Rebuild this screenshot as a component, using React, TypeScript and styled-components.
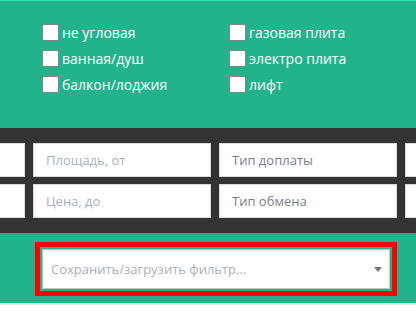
import styled, { createGlobalStyle } from 'styled-components';

const GlobalStyle = createGlobalStyle`
  html, body {
    margin: 0;
    padding: 0;
    background: #ffffff;
    overflow: hidden;
  }
  body {
    font-family: "Open Sans", "Noto Sans", sans-serif;
  }
`;

const leftOptions = ['не угловая', 'ванная/душ', 'балкон/лоджия'];
const rightOptions = ['газовая плита', 'электро плита', 'лифт'];

// the outer columns lie mostly off screen, only their edges show
const fields = [
  { id: 'a1', text: '', kind: 'select' },
  { id: 'a2', text: 'Площадь, от', kind: 'input' },
  { id: 'a3', text: 'Тип доплаты', kind: 'select' },
  { id: 'a4', text: '', kind: 'input' },
  { id: 'b1', text: '', kind: 'select' },
  { id: 'b2', text: 'Цена, до', kind: 'input' },
  { id: 'b3', text: 'Тип обмена', kind: 'select' },
  { id: 'b4', text: '', kind: 'input' },
];

const App = () => {
  return (
    <Page>
      <GlobalStyle />
      <FeaturesSection>
        <FeatureColumns>
          {[leftOptions, rightOptions].map((column, i) => (
            <FeatureColumn key={i}>
              {column.map((label) => (
                <CheckRow key={label}>
                  <CheckBox />
                  <CheckLabel>{label}</CheckLabel>
                </CheckRow>
              ))}
            </FeatureColumn>
          ))}
        </FeatureColumns>
      </FeaturesSection>

      <FilterBand>
        <FilterGrid>
          {fields.map((field) =>
            field.kind === 'input' ? (
              <TextField key={field.id} placeholder={field.text} readOnly />
            ) : (
              <SelectField key={field.id}>{field.text}</SelectField>
            )
          )}
        </FilterGrid>
      </FilterBand>

      <SaveSection>
        <Highlight>
          <SaveSelect>
            <SavePlaceholder>Сохранить/загрузить фильтр...</SavePlaceholder>
            <Caret width="8" height="5" viewBox="0 0 8 5">
              <path d="M0 0 L8 0 L4 5 Z" fill="#777" />
            </Caret>
          </SaveSelect>
        </Highlight>
      </SaveSection>

      <Footer />
    </Page>
  );
};

const Page = styled.div`
  width: 416px;
  overflow: hidden;
`;

const FeaturesSection = styled.div`
  background-color: #22b38c;
  border-top: 1px solid #2fe0a8;
  height: 127px;
`;

const FeatureColumns = styled.div`
  display: flex;
  padding: 23px 0 0 42px;
`;

const FeatureColumn = styled.div`
  width: 188px;
  display: flex;
  flex-direction: column;
  gap: 9px;
`;

const CheckRow = styled.div`
  display: flex;
  align-items: center;
  height: 17px;
  gap: 3px;
`;

const CheckBox = styled.span`
  box-sizing: border-box;
  width: 17px;
  height: 17px;
  background: #ffffff;
  border: 1px solid #858585;
  border-radius: 2px;
`;

const CheckLabel = styled.span`
  color: #ffffff;
  font-size: 14px;
  line-height: 17px;
`;

const FilterBand = styled.div`
  background-color: #333333;
  padding: 15px 0;
`;

const FilterGrid = styled.div`
  display: grid;
  grid-template-columns: repeat(4, 178px);
  column-gap: 8px;
  row-gap: 7px;
  margin-left: -153px;
`;

const fieldBase = `
  box-sizing: border-box;
  height: 34px;
  margin: 0;
  padding: 0 12px;
  background: #ffffff;
  border: 1px solid #d8d8d8;
  font-family: "Open Sans", "Noto Sans", sans-serif;
  font-size: 13px;
  outline: none;
`;

const TextField = styled.input`
  ${fieldBase}
  width: 178px;
  color: #555;

  &::placeholder {
    color: #aab0bb;
  }
`;

const SelectField = styled.div`
  ${fieldBase}
  display: flex;
  align-items: center;
  color: #7a8089;
  white-space: nowrap;
  overflow: hidden;
`;

const SaveSection = styled.div`
  background-color: #22b38c;
  height: 70px;
  box-sizing: border-box;
  padding: 9px 0 0 35px;
`;

const Highlight = styled.div`
  box-sizing: border-box;
  width: 362px;
  border: 5px solid #ff0000;
  padding: 2px;
`;

const SaveSelect = styled.div`
  box-sizing: border-box;
  height: 40px;
  display: flex;
  align-items: center;
  justify-content: space-between;
  padding: 0 7px 0 8px;
  background: #ffffff;
  border: 1px solid #c4c4c4;
  box-shadow: inset 1px 1px 1px rgba(0, 0, 0, 0.08);
`;

const SavePlaceholder = styled.span`
  color: #aab0b8;
  font-size: 13px;
`;

const Caret = styled.svg`
  display: block;
`;

const Footer = styled.div`
  height: 30px;
  border-top: 2px solid #e8e8e8;
  background: #ffffff;
`;

export default App;
